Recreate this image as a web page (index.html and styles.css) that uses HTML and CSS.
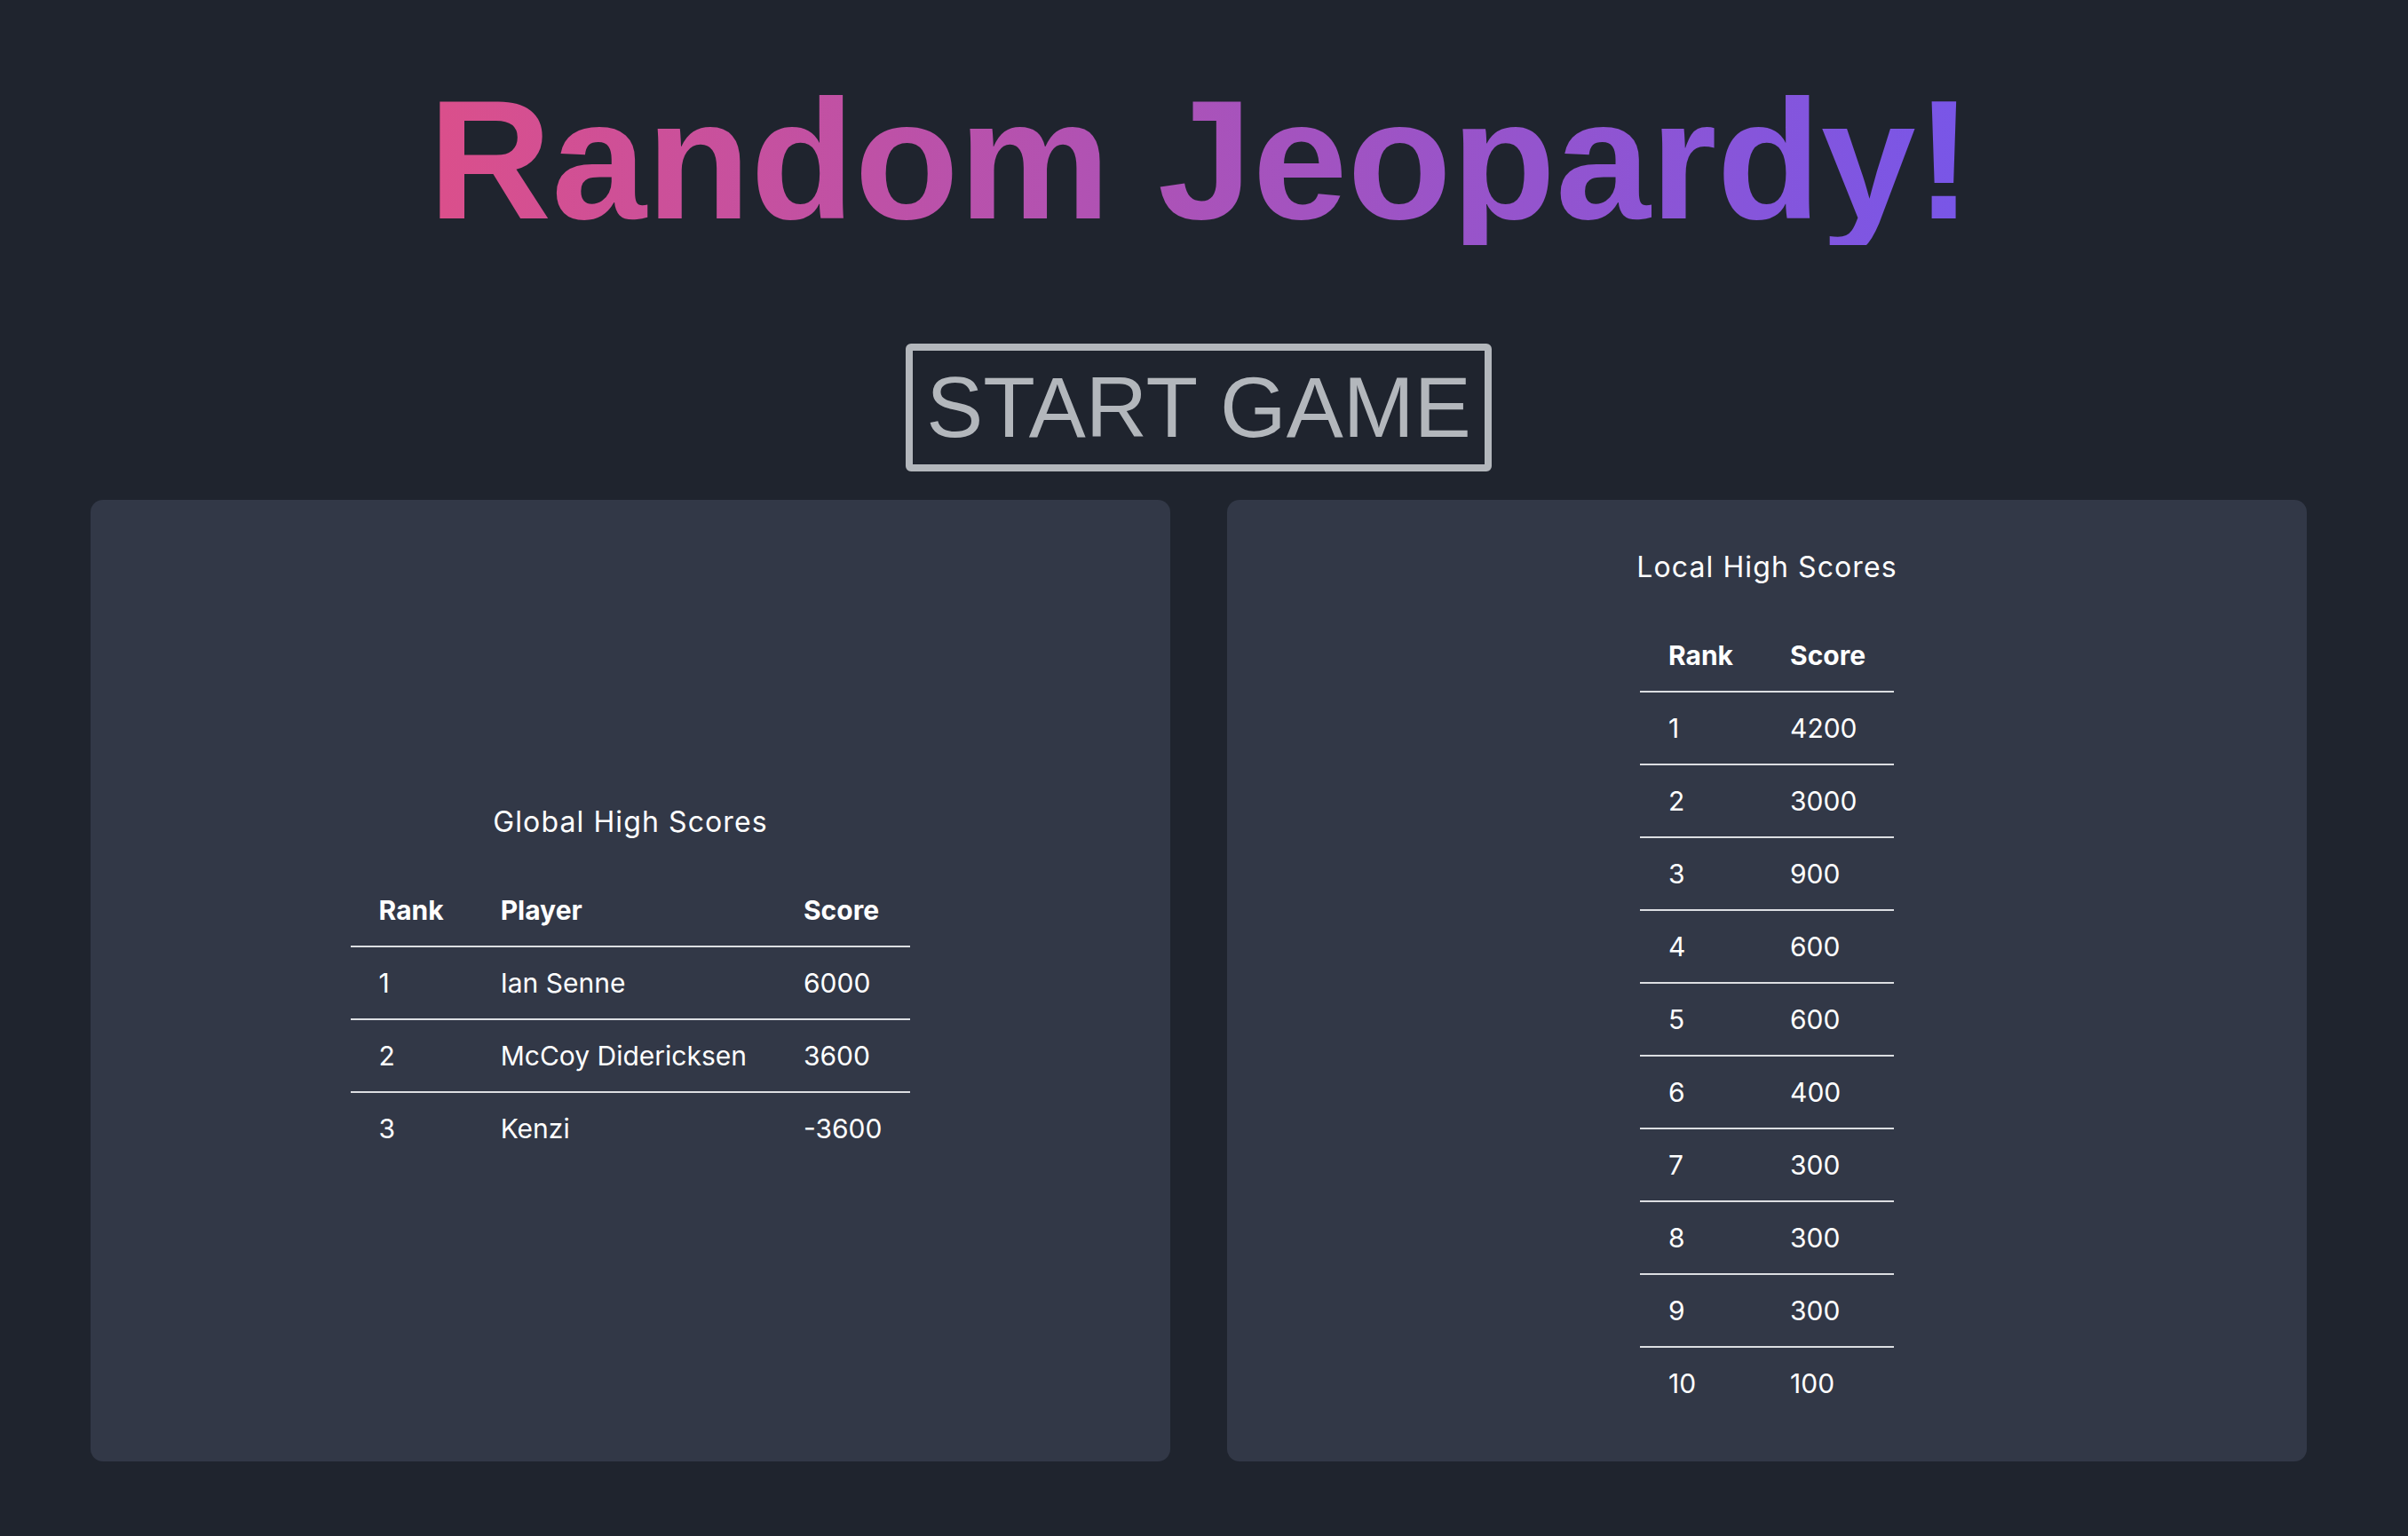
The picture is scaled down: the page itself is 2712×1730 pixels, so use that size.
FILE: index.html
```html
<!DOCTYPE html>
<html lang="en">
<head>
<meta charset="utf-8">
<title>Random Jeopardy!</title>
<link rel="stylesheet" href="styles.css">
</head>
<body>
<div class="page">
  <header class="hero">
    <h1 class="title">Random Jeopardy!</h1>
    <button class="start-btn" type="button">START GAME</button>
  </header>
  <main class="boards">
    <section class="panel">
      <h2 class="panel-title">Global High Scores</h2>
      <table class="scores">
        <thead>
          <tr><th>Rank</th><th>Player</th><th>Score</th></tr>
        </thead>
        <tbody>
          <tr><td>1</td><td>Ian Senne</td><td>6000</td></tr>
          <tr><td>2</td><td>McCoy Didericksen</td><td>3600</td></tr>
          <tr><td>3</td><td>Kenzi</td><td>-3600</td></tr>
        </tbody>
      </table>
    </section>
    <section class="panel">
      <h2 class="panel-title">Local High Scores</h2>
      <table class="scores">
        <thead>
          <tr><th>Rank</th><th>Score</th></tr>
        </thead>
        <tbody>
          <tr><td>1</td><td>4200</td></tr>
          <tr><td>2</td><td>3000</td></tr>
          <tr><td>3</td><td>900</td></tr>
          <tr><td>4</td><td>600</td></tr>
          <tr><td>5</td><td>600</td></tr>
          <tr><td>6</td><td>400</td></tr>
          <tr><td>7</td><td>300</td></tr>
          <tr><td>8</td><td>300</td></tr>
          <tr><td>9</td><td>300</td></tr>
          <tr><td>10</td><td>100</td></tr>
        </tbody>
      </table>
    </section>
  </main>
</div>
</body>
</html>
```
FILE: styles.css
```css
html, body {
  margin: 0;
  padding: 0;
  background: #1f242e;
}

body {
  padding-right: 12px;
  font-family: Inter, "Liberation Sans", sans-serif;
  color: #ffffff;
}

.page {
  display: flex;
  flex-direction: column;
  align-items: center;
}

.hero {
  display: flex;
  flex-direction: column;
  align-items: center;
}

.title {
  display: inline-block;
  margin: 84px 0 0 4px;
  font-family: "Liberation Sans", Arial, sans-serif;
  font-weight: 700;
  font-size: 192px;
  line-height: 192px;
  background: linear-gradient(90deg, #db4f8b 0%, #7856e8 100%);
  -webkit-background-clip: text;
  background-clip: text;
  color: transparent;
}

.start-btn {
  margin-top: 111px;
  padding: 8px 15px;
  background: transparent;
  border: 8px solid #b3b7bc;
  border-radius: 6px;
  color: #b3b7bc;
  font-family: "Liberation Sans", Arial, sans-serif;
  font-size: 96px;
  line-height: 112px;
  font-weight: 400;
}

.boards {
  margin-top: 32px;
  display: grid;
  grid-template-columns: 1216px 1216px;
  gap: 64px;
}

.panel {
  background: #323847;
  border-radius: 14px;
  padding: 48px;
  display: flex;
  flex-direction: column;
  align-items: center;
  justify-content: center;
}

.panel-title {
  margin: 8px 0 40px 0;
  font-size: 32px;
  line-height: 39px;
  font-weight: 400;
  letter-spacing: 1.1px;
}

.scores {
  border-collapse: collapse;
  font-size: 30px;
}

.scores th,
.scores td {
  padding: 24px 32px;
  line-height: 32px;
  text-align: left;
  white-space: nowrap;
}

.scores th {
  font-weight: 700;
}

.scores thead tr,
.scores tbody tr {
  border-bottom: 2px solid #dcdee2;
}

.scores tbody tr:last-child {
  border-bottom: none;
}
```
